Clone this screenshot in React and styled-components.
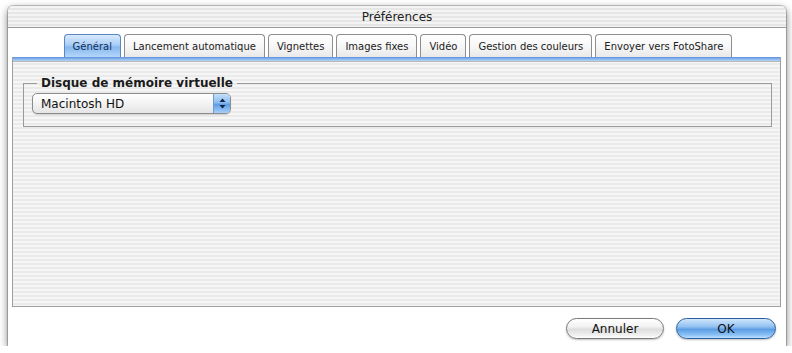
import React from "react";
import styled, { createGlobalStyle } from "styled-components";

const GlobalStyle = createGlobalStyle`
  html, body {
    margin: 0;
    padding: 0;
    background: #ffffff;
  }
  body {
    font-family: "DejaVu Sans", "Noto Sans", sans-serif;
    color: #1e1e1e;
  }
`;

const pinstripes = `repeating-linear-gradient(180deg, #f6f6f6 0px, #f6f6f6 2px, #eaeaea 2px, #eaeaea 4px)`;

const Window = styled.div`
  width: 778px;
  height: 340px;
  margin: 6px 0 0 8px;
  display: flex;
  flex-direction: column;
  background: #ffffff;
  border-radius: 5px 5px 0 0;
  box-shadow: 0 3px 9px rgba(0, 0, 0, 0.55), 0 0 0 1px rgba(0, 0, 0, 0.2);
  overflow: hidden;
`;

const TitleBar = styled.div`
  height: 21px;
  flex: none;
  display: flex;
  align-items: center;
  justify-content: center;
  background: repeating-linear-gradient(180deg, #f4f4f4 0px, #f4f4f4 2px, #e6e6e6 2px, #e6e6e6 4px);
  border-bottom: 1px solid #9a9a9a;
  font-size: 12px;
  color: #222;
`;

const Body = styled.div`
  flex: 1;
  display: flex;
  flex-direction: column;
  padding-top: 6px;
`;

const TabRow = styled.div`
  display: flex;
  justify-content: center;
  gap: 3px;
  height: 23px;
  padding-left: 2px;
`;

const Tab = styled.div`
  height: 22px;
  padding: 0 8px;
  display: flex;
  align-items: center;
  font-size: 10px;
  white-space: nowrap;
  border: 1px solid ${(p) => (p.$active ? "#5b86c4" : "#8e8e8e")};
  border-bottom: none;
  border-radius: 4px 4px 0 0;
  color: ${(p) => (p.$active ? "#14305c" : "#222")};
  background: ${(p) =>
    p.$active
      ? "linear-gradient(180deg, #d8eafc 0%, #a9cdf4 45%, #86b8ee 55%, #b4d6fa 100%)"
      : "linear-gradient(180deg, #ffffff 0%, #f7f7f7 50%, #e9e9e9 100%)"};
`;

const Pane = styled.div`
  margin: 0 5px 0 4px;
  height: 249px;
  display: flex;
  flex-direction: column;
  border: 1px solid #9e9e9e;
  border-top: none;
  background: ${pinstripes};
`;

const Band = styled.div`
  height: 4px;
  flex: none;
  background: linear-gradient(180deg, #5c8fd6 0%, #8ab6ee 50%, #b5d3f6 100%);
  border-bottom: 1px solid #b9b9b9;
`;

const Group = styled.fieldset`
  margin: 14px 8px 0 10px;
  padding: 3px 8px 12px 8px;
  border: 1px solid #9a9a9a;
  min-width: 0;
`;

const GroupTitle = styled.legend`
  margin-left: 5px;
  padding: 0 4px;
  font-size: 12px;
  font-weight: bold;
  color: #1a1a1a;
`;

const Popup = styled.div`
  width: 197px;
  height: 19px;
  display: flex;
  align-items: stretch;
  border: 1px solid #8c8c8c;
  border-radius: 5px;
  overflow: hidden;
  background: linear-gradient(180deg, #ffffff 0%, #f3f3f3 50%, #e4e4e4 100%);
  box-shadow: 0 1px 1px rgba(0, 0, 0, 0.15);
`;

const PopupLabel = styled.span`
  flex: 1;
  display: flex;
  align-items: center;
  padding-left: 8px;
  font-size: 12px;
  color: #111;
`;

const PopupArrows = styled.span`
  width: 16px;
  display: flex;
  align-items: center;
  justify-content: center;
  border-left: 1px solid #6f9ad6;
  background: linear-gradient(180deg, #c4dffa 0%, #8dbdf0 45%, #5f9de6 55%, #a6cff8 100%);
`;

const ButtonRow = styled.div`
  display: flex;
  justify-content: flex-end;
  gap: 12px;
  padding: 11px 10px 0 0;
`;

const PushButton = styled.button`
  width: ${(p) => p.$width}px;
  height: 21px;
  padding: 0;
  font-family: "DejaVu Sans", "Noto Sans", sans-serif;
  font-size: 12px;
  color: #111;
  border-radius: 11px;
  border: 1px solid ${(p) => (p.$primary ? "#2d5f9e" : "#7a7a7a")};
  background: ${(p) =>
    p.$primary
      ? "linear-gradient(180deg, #cfe5fb 0%, #93c2f1 40%, #5d9de5 55%, #8cc3f6 85%, #bfe0fd 100%)"
      : "linear-gradient(180deg, #ffffff 0%, #f2f2f2 40%, #dedede 55%, #f0f0f0 85%, #ffffff 100%)"};
  box-shadow: 0 1px 2px rgba(0, 0, 0, 0.25);
`;

const tabs = [
  "Général",
  "Lancement automatique",
  "Vignettes",
  "Images fixes",
  "Vidéo",
  "Gestion des couleurs",
  "Envoyer vers FotoShare",
];

const Arrows = () => (
  <svg width="7" height="11" viewBox="0 0 7 11">
    <path d="M3.5 0.5 L6.5 4 L0.5 4 Z" fill="#10264a" />
    <path d="M3.5 10.5 L6.5 7 L0.5 7 Z" fill="#10264a" />
  </svg>
);

export default function App() {
  return (
    <>
      <GlobalStyle />
      <Window>
        <TitleBar>Préférences</TitleBar>
        <Body>
          <TabRow>
            {tabs.map((t, i) => (
              <Tab key={t} $active={i === 0}>
                {t}
              </Tab>
            ))}
          </TabRow>
          <Pane>
            <Band />
            <Group>
              <GroupTitle>Disque de mémoire virtuelle</GroupTitle>
              <Popup>
                <PopupLabel>Macintosh HD</PopupLabel>
                <PopupArrows>
                  <Arrows />
                </PopupArrows>
              </Popup>
            </Group>
          </Pane>
          <ButtonRow>
            <PushButton $width={98}>Annuler</PushButton>
            <PushButton $width={100} $primary>
              OK
            </PushButton>
          </ButtonRow>
        </Body>
      </Window>
    </>
  );
}
